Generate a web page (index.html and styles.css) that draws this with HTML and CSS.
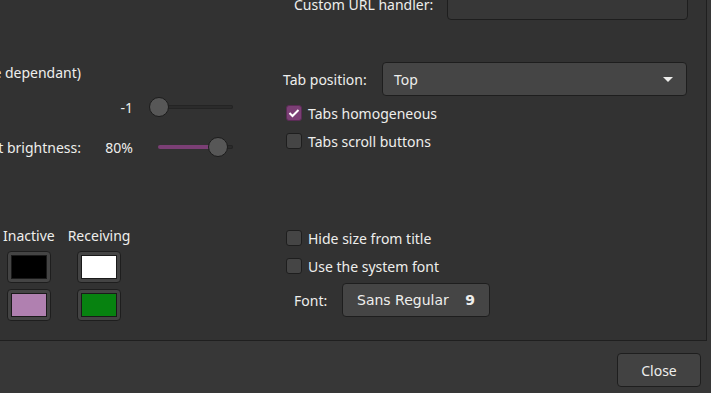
FILE: index.html
```html
<!DOCTYPE html>
<html lang="en">
<head>
  <meta charset="UTF-8">
  <title>Terminator Preferences</title>
  <link rel="stylesheet" href="styles.css">
</head>
<body>
  <div class="notebook">
    <div class="left-col">
      <div class="row note-row">
        <span class="label">(theme dependant)</span>
      </div>

      <div class="row slider-row first">
        <span class="label"></span>
        <span class="value">-1</span>
        <div class="scale scale-size">
          <div class="trough"></div>
          <div class="knob knob-start"></div>
        </div>
      </div>

      <div class="row slider-row second">
        <span class="label">Unfocused terminal font brightness:</span>
        <span class="value">80%</span>
        <div class="scale scale-bright">
          <div class="trough"></div>
          <div class="fill"></div>
          <div class="knob knob-bright"></div>
        </div>
      </div>

      <div class="swatches">
        <span class="swatch-title">Inactive</span>
        <span class="swatch-title">Receiving</span>
        <button class="swatch"><span class="chip chip-black"></span></button>
        <button class="swatch"><span class="chip chip-white"></span></button>
        <button class="swatch"><span class="chip chip-pink"></span></button>
        <button class="swatch"><span class="chip chip-green"></span></button>
      </div>
    </div>

    <div class="right-col">
      <div class="field-row url-row">
        <span class="field-label">Custom URL handler:</span>
        <div class="entry"></div>
      </div>

      <div class="field-row tab-row">
        <span class="field-label">Tab position:</span>
        <div class="combo">
          <span>Top</span>
          <span class="arrow"></span>
        </div>
      </div>

      <label class="check-row first-check">
        <span class="check checked">
          <svg width="12" height="10" viewBox="0 0 12 10"><polyline points="1.5,5 4.5,8 10.5,2" fill="none" stroke="#fff" stroke-width="2"/></svg>
        </span>
        Tabs homogeneous
      </label>
      <label class="check-row">
        <span class="check"></span>
        Tabs scroll buttons
      </label>

      <label class="check-row title-check">
        <span class="check"></span>
        Hide size from title
      </label>
      <label class="check-row">
        <span class="check"></span>
        Use the system font
      </label>

      <div class="field-row font-row">
        <span class="field-label">Font:</span>
        <button class="font-button">
          <span class="font-name">Sans Regular</span>
          <span class="font-size">9</span>
        </button>
      </div>
    </div>
  </div>

  <div class="action-area">
    <button class="close-button">Close</button>
  </div>
</body>
</html>
```

FILE: styles.css
```css
/* Dark GTK dialog */
body {
  margin: 0;
  width: 711px;
  height: 393px;
  overflow: hidden;
  background: #373737;
  color: #eeeeec;
  font-family: 'Noto Sans', 'Open Sans', sans-serif;
  font-size: 14px;
}

button {
  font-family: inherit;
  color: inherit;
  cursor: pointer;
}

.notebook {
  width: 706px;
  height: 340px;
  background: #323232;
  border-right: 1px solid #1f1f1f;
  border-bottom: 1px solid #1f1f1f;
  display: flex;
  overflow: hidden;
}

/* Left column */
.left-col {
  width: 280px;
  flex: none;
  display: flex;
  flex-direction: column;
}

.row {
  display: flex;
  align-items: center;
  height: 20px;
}

.label {
  width: 81px;
  flex: none;
  display: flex;
  justify-content: flex-end;
  white-space: nowrap;
}

.note-row {
  margin-top: 62px;
}

.slider-row.first {
  margin-top: 15px;
}

.slider-row.second {
  margin-top: 20px;
}

.value {
  width: 52px;
  flex: none;
  text-align: right;
}

.scale {
  position: relative;
  height: 20px;
}

.scale-size {
  width: 84px;
  margin-left: 16px;
}

.scale-bright {
  width: 75px;
  margin-left: 25px;
}

.trough {
  position: absolute;
  left: 1px;
  right: 0;
  top: 8px;
  height: 4px;
  border-radius: 2px;
  background: #2b2b2b;
  box-shadow: inset 0 0 0 1px #242424;
}

.fill {
  position: absolute;
  left: 0;
  width: 56px;
  top: 8px;
  height: 4px;
  border-radius: 2px;
  background: #7b3f75;
}

.knob {
  position: absolute;
  top: 0;
  width: 18px;
  height: 18px;
  border-radius: 50%;
  background: #575757;
  border: 1px solid #1c1c1c;
}

.knob-start {
  left: 0;
}

.knob-bright {
  left: 50px;
}

.swatches {
  margin-top: 69px;
  margin-left: 3px;
  display: grid;
  grid-template-columns: auto auto;
  column-gap: 13px;
  row-gap: 6px;
  justify-items: center;
  justify-content: start;
}

.swatch-title {
  line-height: 20px;
  margin-bottom: -1px;
}

.swatch {
  width: 44px;
  height: 32px;
  padding: 0;
  background: #444;
  border: 1px solid #1e1e1e;
  border-radius: 4px;
  display: flex;
  align-items: center;
  justify-content: center;
}

.chip {
  display: block;
  width: 36px;
  height: 24px;
  box-sizing: border-box;
  border: 1px solid #1a1a1a;
}

.chip-black { background: #000; }
.chip-white { background: #fff; }
.chip-pink { background: #b080b0; }
.chip-green { background: #078210; }

/* Right column */
.right-col {
  width: 408px;
  flex: none;
  display: flex;
  flex-direction: column;
}

.field-row {
  display: flex;
  align-items: center;
}

.url-row {
  margin-top: -12px;
  margin-left: 14px;
}

.url-row .field-label {
  width: 153px;
}

.entry {
  flex: 1;
  height: 30px;
  background: #373737;
  border: 1px solid #1e1e1e;
  border-radius: 4px;
}

.tab-row {
  margin-top: 42px;
  margin-left: 3px;
}

.tab-row .field-label {
  width: 99px;
}

.combo {
  flex: 1;
  height: 32px;
  margin-right: 1px;
  box-sizing: content-box;
  background: #454545;
  border: 1px solid #1e1e1e;
  border-radius: 4px;
  display: flex;
  align-items: center;
  justify-content: space-between;
  padding: 0 13px 0 11px;
}

.arrow {
  width: 0;
  height: 0;
  border-left: 5px solid transparent;
  border-right: 5px solid transparent;
  border-top: 5px solid #eeeeec;
}

.check-row {
  display: flex;
  align-items: center;
  height: 20px;
  margin-left: 6px;
  margin-top: 8px;
  white-space: nowrap;
}

.first-check {
  margin-top: 7px;
}

.title-check {
  margin-top: 77px;
}

.check {
  width: 14px;
  height: 14px;
  margin-right: 6px;
  background: #454545;
  border: 1px solid #1e1e1e;
  border-radius: 3px;
  display: flex;
  align-items: center;
  justify-content: center;
}

.check.checked {
  background: #7b3f75;
  border-color: #5a2b55;
}

.font-row {
  margin-top: 7px;
  margin-left: 14px;
}

.font-row .field-label {
  width: 48px;
}

.font-button {
  width: 148px;
  height: 34px;
  background: #454545;
  border: 1px solid #1e1e1e;
  border-radius: 4px;
  display: flex;
  align-items: center;
  padding: 0 14px;
  font-family: 'DejaVu Sans', sans-serif;
  font-size: 14px;
}

.font-name {
  flex: 1;
  text-align: left;
}

.font-size {
  font-weight: bold;
}

/* Bottom buttons */
.action-area {
  display: flex;
  justify-content: flex-end;
  padding: 12px 10px 0 0;
}

.close-button {
  width: 84px;
  height: 34px;
  background: #424242;
  border: 1px solid #1e1e1e;
  border-radius: 4px;
  font-size: 14px;
}
```
